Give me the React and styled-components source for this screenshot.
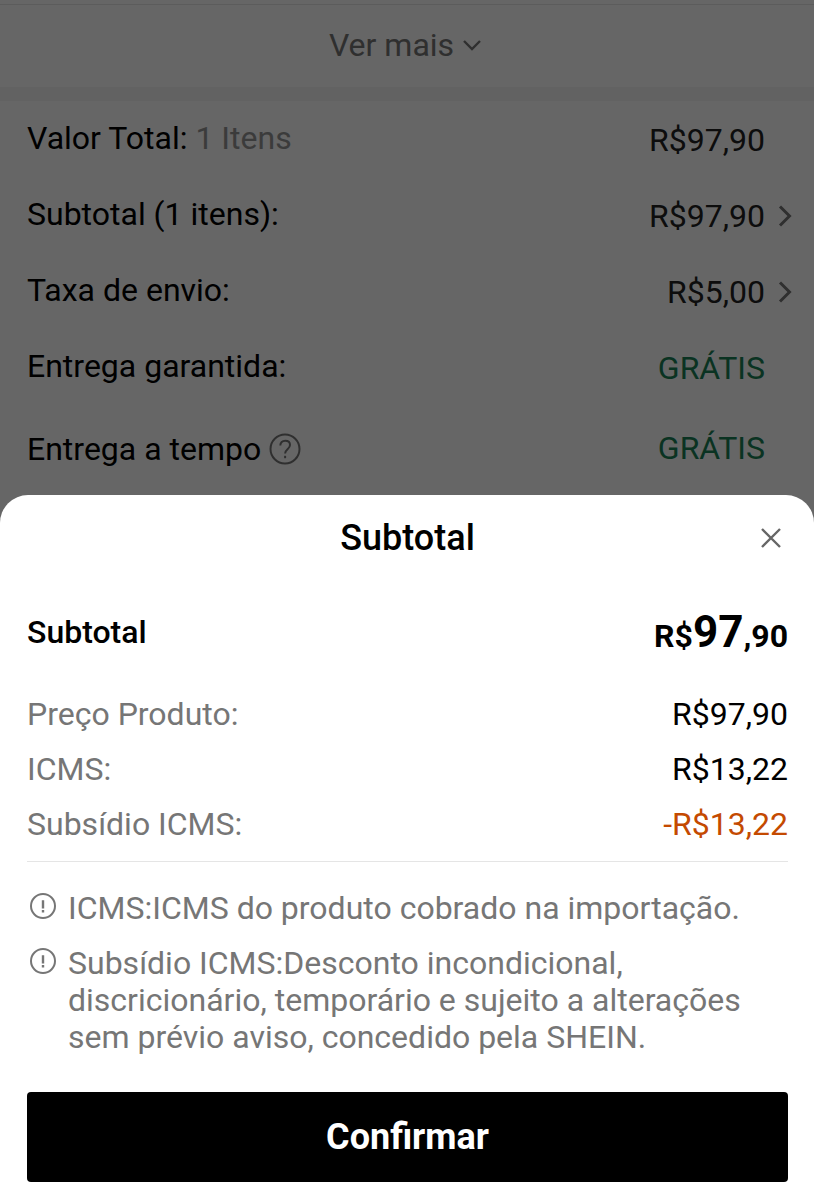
import React from 'react';
import styled, { createGlobalStyle } from 'styled-components';

const palette = {
    black: '#000000',
    ink: '#222222',
    gray: '#767676',
    lightGray: '#959595',
    line: '#e5e5e5',
    band: '#f6f6f6',
    green: '#198055',
    orange: '#c44a01',
};

const GlobalStyle = createGlobalStyle`
    *{
        box-sizing: border-box;
    }
    body{
        margin: 0;
        background: #fff;
        font-family: Roboto, "Liberation Sans", sans-serif;
        font-size: 32px;
        line-height: 37px;
    }
    button{
        font-family: inherit;
        border: none;
        padding: 0;
        cursor: pointer;
    }
    svg{
        display: block;
        flex: none;
        fill: none;
        stroke: currentColor;
    }
`

const Page = styled.main`
    padding-top: 4px;
`

const MoreButton = styled.button`
    display: flex;
    align-items: center;
    justify-content: center;
    gap: 9px;
    width: 100%;
    height: 83px;
    padding: 0 4px 2px 0;
    border-top: 1px solid ${palette.line};
    background: none;
    color: ${palette.gray};
    font-size: 32px;
`

const Band = styled.div`
    height: 14px;
    background: ${palette.band};
`

const OrderRow = styled.div`
    display: flex;
    align-items: center;
    justify-content: space-between;
    height: ${(props) => (props.$tall ? '88px' : '76px')};
    padding: 0 22px 0 27px;
`

const OrderLabel = styled.div`
    display: flex;
    align-items: center;
    gap: 8px;
    padding-bottom: ${(props) => (props.$tall ? '0' : '2px')};
    color: ${palette.black};
`

const Muted = styled.span`
    color: ${palette.lightGray};
`

const OrderValue = styled.div`
    display: grid;
    grid-template-columns: auto 27px;
    align-items: center;
    padding-top: ${(props) => (props.$tall ? '0' : '2px')};
    padding-bottom: ${(props) => (props.$tall ? '2px' : '0')};
    color: ${(props) => (props.$free ? palette.green : palette.ink)};
`

const IconButton = styled.button`
    display: flex;
    justify-content: flex-end;
    background: none;
    color: ${(props) => props.$color || palette.gray};
`

const Overlay = styled.div`
    position: fixed;
    inset: 0;
    display: flex;
    align-items: flex-end;
    background: rgba(0, 0, 0, 0.6);
`

const Sheet = styled.section`
    width: 100%;
    padding: 0 26px 18px 27px;
    border-radius: 28px 28px 0 0;
    background: #fff;
`

const SheetHeader = styled.header`
    display: grid;
    grid-template-columns: 1fr auto 1fr;
    align-items: center;
    height: 86px;
    padding: 0 7px;
`

const Title = styled.h2`
    grid-column: 2;
    margin: 0;
    font-size: 36px;
    font-weight: 500;
`

const TotalRow = styled.div`
    display: flex;
    align-items: center;
    justify-content: space-between;
    height: 102px;
    margin-bottom: 4px;
    font-weight: 500;
`

const Total = styled.div`
    padding-top: 4px;
    font-weight: 700;
    big{
        font-size: 44px;
    }
`

const PriceList = styled.dl`
    margin: 0;
    padding-bottom: 9px;
    border-bottom: 1px solid ${palette.line};
`

const PriceRow = styled.div`
    display: flex;
    align-items: center;
    justify-content: space-between;
    height: 55px;
    dt{
        color: ${palette.gray};
    }
    dd{
        margin: 0;
        color: ${(props) => (props.$discount ? palette.orange : palette.black)};
    }
`

const Notes = styled.ul`
    display: flex;
    flex-direction: column;
    gap: 18px;
    margin: 28px 0 36px;
    padding: 0;
    list-style: none;
`

const Note = styled.li`
    display: flex;
    align-items: flex-start;
    gap: 11px;
    padding-left: 2px;
    color: ${palette.gray};
    svg{
        margin-top: 2px;
    }
`

const ConfirmButton = styled.button`
    display: block;
    width: 100%;
    height: 90px;
    border-radius: 4px;
    background: ${palette.black};
    color: #fff;
    font-size: 36px;
    font-weight: 700;
`

const ChevronDown = () => (
    <svg width="18" height="12" viewBox="0 0 18 12" strokeWidth="2.4" aria-hidden="true">
        <path d="M1 2l8 8 8-8" />
    </svg>
)

const ChevronRight = () => (
    <svg width="14" height="22" viewBox="0 0 14 22" strokeWidth="3" aria-hidden="true">
        <path d="M2 1.5l9.5 9.5L2 20.5" />
    </svg>
)

const CloseIcon = () => (
    <svg width="20" height="20" viewBox="0 0 20 20" strokeWidth="2.4" aria-hidden="true">
        <path d="M1 1l18 18M19 1L1 19" />
    </svg>
)

const HelpIcon = () => (
    <svg width="32" height="32" viewBox="0 0 32 32" strokeWidth="2" aria-hidden="true">
        <circle cx="16" cy="16" r="14.5" />
        <path d="M11.3 12.6c0-3 2-4.9 4.9-4.9s4.8 1.8 4.8 4.3c0 4-4.9 4.4-4.9 8.4" />
        <path d="M16.1 22.8v2.4" />
    </svg>
)

const NoticeIcon = () => (
    <svg width="28" height="28" viewBox="0 0 28 28" strokeWidth="2" aria-hidden="true">
        <circle cx="14" cy="14" r="12" />
        <path d="M14 8.2v8.3M14 18v2.4" strokeWidth="2.4" />
    </svg>
)

const orderRows = [
    { label: 'Valor Total:', note: '1 Itens', value: 'R$97,90' },
    { label: 'Subtotal (1 itens):', value: 'R$97,90', more: true },
    { label: 'Taxa de envio:', value: 'R$5,00', more: true },
    { label: 'Entrega garantida:', value: 'GRÁTIS', free: true },
    { label: 'Entrega a tempo', value: 'GRÁTIS', free: true, help: true },
]

const priceRows = [
    { label: 'Preço Produto:', value: 'R$97,90' },
    { label: 'ICMS:', value: 'R$13,22' },
    { label: 'Subsídio ICMS:', value: '-R$13,22', discount: true },
]

const notes = [
    'ICMS:ICMS do produto cobrado na importação.',
    'Subsídio ICMS:Desconto incondicional, discricionário, temporário e sujeito a alterações sem prévio aviso, concedido pela SHEIN.',
]

const App = () => {
    return (
        <>
            <GlobalStyle />
            <Page>
                <MoreButton type="button">Ver mais <ChevronDown /></MoreButton>
                <Band />
                {orderRows.map(({ label, note, value, more, free, help }) => (
                    <OrderRow key={label} $tall={help}>
                        <OrderLabel $tall={help}>
                            <span>{label}{note && <Muted> {note}</Muted>}</span>
                            {help && <IconButton type="button" aria-label="Ajuda"><HelpIcon /></IconButton>}
                        </OrderLabel>
                        <OrderValue $free={free} $tall={help}>
                            <span>{value}</span>
                            {more && <IconButton type="button" aria-label={label}><ChevronRight /></IconButton>}
                        </OrderValue>
                    </OrderRow>
                ))}
            </Page>
            <Overlay>
                <Sheet role="dialog" aria-modal="true" aria-labelledby="sheet-title">
                    <SheetHeader>
                        <Title id="sheet-title">Subtotal</Title>
                        <IconButton type="button" aria-label="Fechar" $color="#666"><CloseIcon /></IconButton>
                    </SheetHeader>
                    <TotalRow>
                        <span>Subtotal</span>
                        <Total>R$<big>97</big>,90</Total>
                    </TotalRow>
                    <PriceList>
                        {priceRows.map(({ label, value, discount }) => (
                            <PriceRow key={label} $discount={discount}>
                                <dt>{label}</dt>
                                <dd>{value}</dd>
                            </PriceRow>
                        ))}
                    </PriceList>
                    <Notes>
                        {notes.map((text) => (
                            <Note key={text}><NoticeIcon /><span>{text}</span></Note>
                        ))}
                    </Notes>
                    <ConfirmButton type="button">Confirmar</ConfirmButton>
                </Sheet>
            </Overlay>
        </>
    );
};

export default App;
